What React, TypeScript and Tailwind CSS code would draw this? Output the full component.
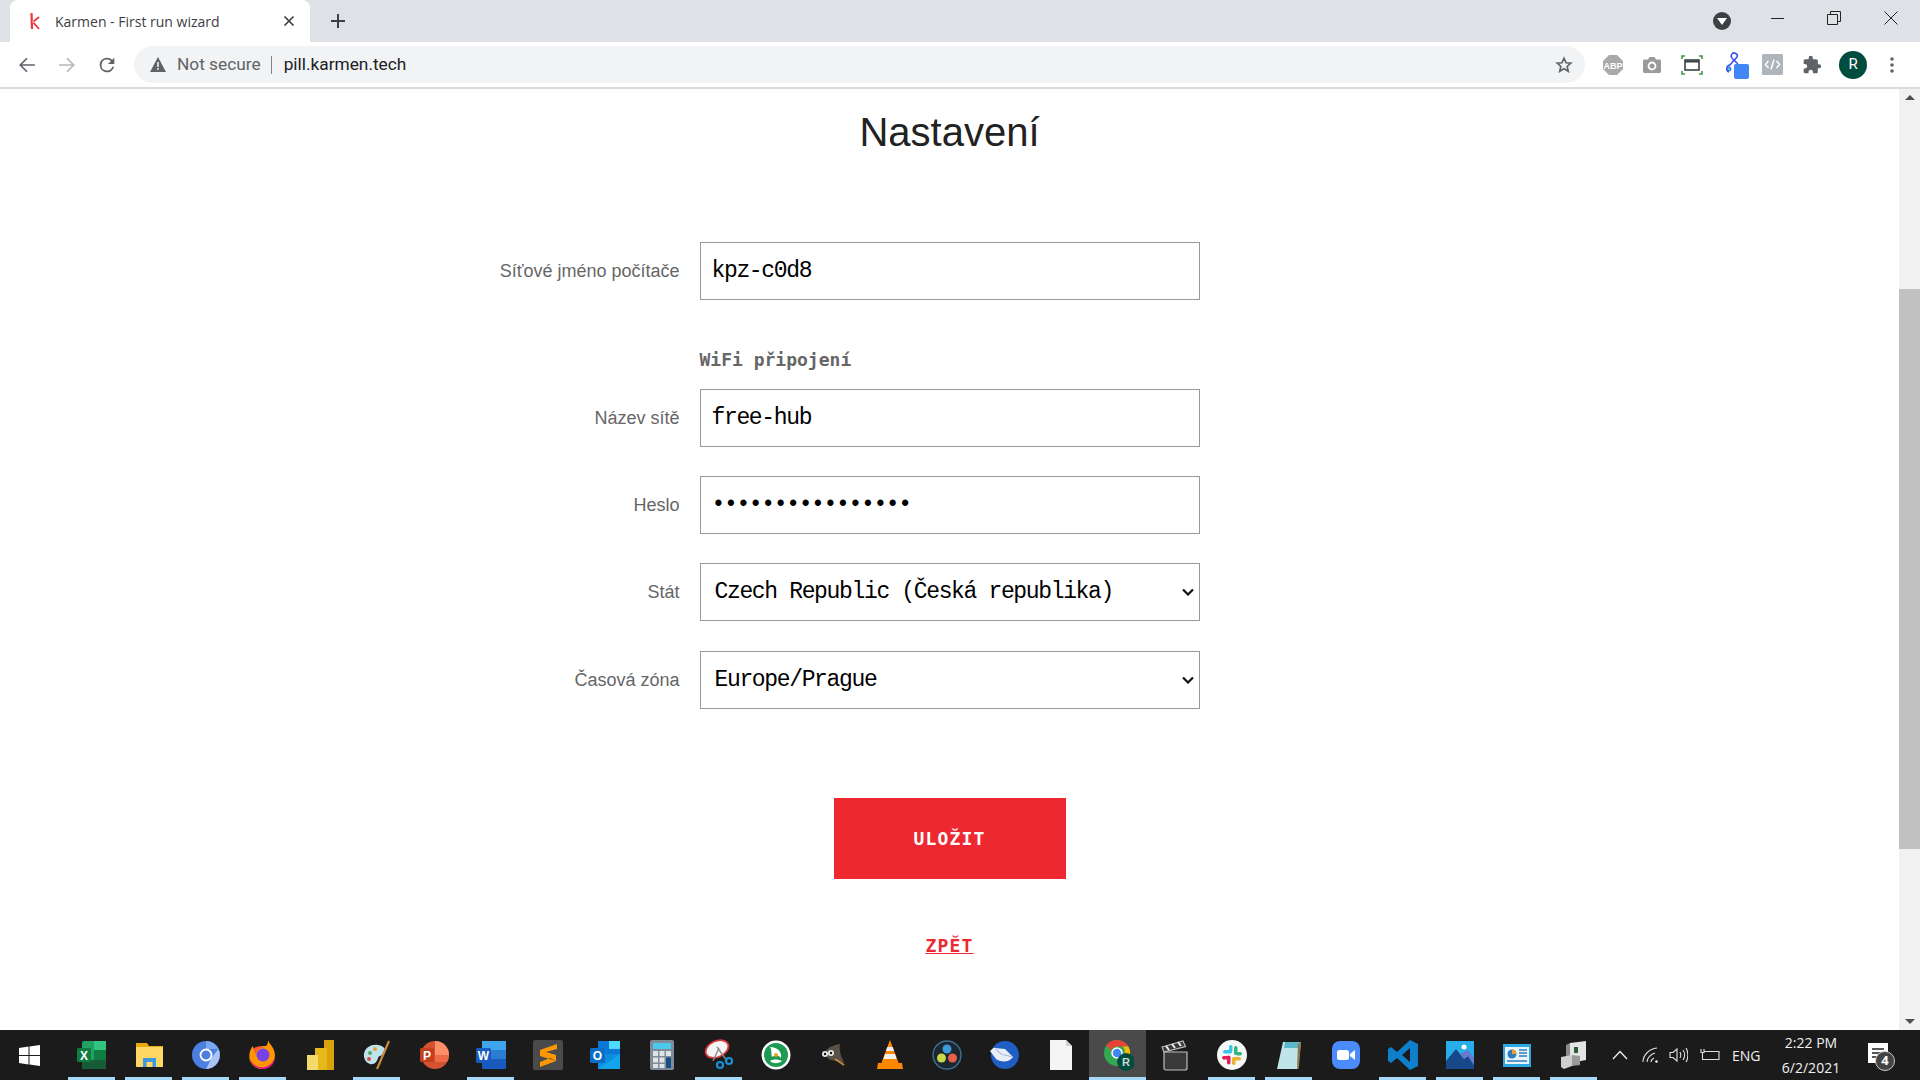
import { ReactNode } from 'react'

const toolbarGray = '#5f6368'

function Favicon() {
  return (
    <svg width="16" height="20" viewBox="0 0 16 20" fill="none">
      <path d="M4.500 2 5 18" stroke="#f0353f" strokeWidth="2.200" />
      <path d="M12 6 6 11l6 7" stroke="#f0353f" strokeWidth="1.800" />
      <path d="M5 11h3" stroke="#f8a0a6" strokeWidth="1.500" />
    </svg>
  )
}

function Abp() {
  return (
    <svg width="22" height="22" viewBox="0 0 22 22">
      <path d="M7 1h8l6 6v8l-6 6H7l-6-6V7z" fill="#a9a9a9" />
      <text x="11" y="14.500" textAnchor="middle" fontSize="9" fontWeight="700" fill="#fff" fontFamily="Liberation Sans, sans-serif">ABP</text>
    </svg>
  )
}

function Camera() {
  return (
    <svg width="20" height="18" viewBox="0 0 20 18">
      <path d="M1 5c0-1 .6-1.600 1.500-1.600H6L7.500 1h5L14 3.400h3.500C18.400 3.400 19 4 19 5v10.500c0 .9-.6 1.500-1.500 1.500h-15C1.600 17 1 16.400 1 15.500z" fill="#9b9b9b" />
      <circle cx="10" cy="10" r="3.500" fill="none" stroke="#fff" strokeWidth="1.800" />
    </svg>
  )
}

function ScreenshotIcon() {
  return (
    <svg width="22" height="20" viewBox="0 0 22 20" fill="none">
      <path d="M1 4V1h3M18 1h3v3M21 16v3h-3M4 19H1v-3" stroke="#3d9a3d" strokeWidth="1.600" />
      <rect x="4" y="5" width="14" height="10" stroke="#3c4043" strokeWidth="1.600" />
      <path d="M4 6.500h14" stroke="#3c4043" strokeWidth="2" />
    </svg>
  )
}

function RouteIcon() {
  return (
    <svg width="26" height="28" viewBox="0 0 26 28" fill="none">
      <path d="M5 15 13 6c1.500-3-3-5.500-5-3C6 5 8 8 11 10l3 3M5 14c-3 1.500-3 6 0 7" stroke="#3f51e8" strokeWidth="1.600" />
      <circle cx="5" cy="18" r="2" fill="#38d6c4" stroke="#3f51e8" strokeWidth="1" />
      <rect x="10" y="13" width="15" height="15" rx="2" fill="#4285f4" />
    </svg>
  )
}

function CodeIcon() {
  return (
    <svg width="21" height="21" viewBox="0 0 21 21" fill="none">
      <rect width="21" height="21" rx="1.500" fill="#aeb4bb" />
      <path d="M6.500 7 3.500 10.500l3 3.500M14.500 7l3 3.500-3 3.500M12 5.500l-3 10" stroke="#fff" strokeWidth="1.500" />
    </svg>
  )
}

function Puzzle() {
  return (
    <svg width="20" height="20" viewBox="0 0 24 24" fill={toolbarGray}>
      <path d="M20.500 11H19V7c0-1.100-.9-2-2-2h-4V3.500a2.500 2.500 0 0 0-5 0V5H4c-1.100 0-2 .9-2 2v3.800h1.500c1.500 0 2.700 1.200 2.700 2.700S5 16.200 3.500 16.200H2V20c0 1.100.9 2 2 2h3.800v-1.500c0-1.500 1.200-2.700 2.700-2.700s2.700 1.200 2.700 2.700V22H17c1.100 0 2-.9 2-2v-4h1.500a2.500 2.500 0 0 0 0-5z" />
    </svg>
  )
}

function TabStrip() {
  return (
    <div className="flex h-[42px] items-start bg-[#dee1e6] pl-[10px]">
      <div className="flex h-[42px] w-[300px] items-center rounded-t-lg bg-white pl-[17px] pr-[10px]">
        <Favicon />
        <span className="ml-[12px] flex-1 font-['Open_Sans',sans-serif] text-[14px] text-[#3c4043]">Karmen - First run wizard</span>
        <svg width="12" height="12" viewBox="0 0 12 12" stroke="#3c4043" strokeWidth="1.700" className="mr-[5px]">
          <path d="m1.500 1.500 9 9m0-9-9 9" />
        </svg>
      </div>
      <svg width="16" height="16" viewBox="0 0 16 16" stroke="#3c4043" strokeWidth="2" className="ml-[20px] mt-[13px]">
        <path d="M8 1v14M1 8h14" />
      </svg>
      <div className="flex-1" />
      <div className="mr-[19px] mt-[12px] flex h-[18px] w-[18px] items-center justify-center rounded-full bg-[#3c4043]">
        <div className="mt-[1px] h-0 w-0 border-x-[5px] border-t-[7px] border-x-transparent border-t-white" />
      </div>
      <div className="flex h-[42px] items-start">
        <div className="flex h-[36px] w-[56px] items-center justify-center pr-[2px]">
          <div className="h-px w-[13px] bg-[#222]" />
        </div>
        <div className="flex h-[36px] w-[56px] items-center justify-center">
          <svg width="14" height="14" viewBox="0 0 14 14" fill="none" stroke="#222">
            <path d="M.5 3.500h10v10H.5zM3.500 3.500v-3h10v10h-3" />
          </svg>
        </div>
        <div className="flex h-[36px] w-[58px] items-center justify-center">
          <svg width="14" height="14" viewBox="0 0 14 14" stroke="#222">
            <path d="m.5.500 13 13m0-13-13 13" />
          </svg>
        </div>
      </div>
    </div>
  )
}

function Toolbar() {
  return (
    <div className="flex h-[47px] items-center border-b-2 border-[#dadce0] bg-white pl-[18px]">
      <svg width="18" height="18" viewBox="0 0 16 16" fill="none" stroke={toolbarGray} strokeWidth="1.500">
        <path d="M15 8H2M8 2 2 8l6 6" />
      </svg>
      <svg width="18" height="18" viewBox="0 0 16 16" fill="none" stroke="#b5b7ba" strokeWidth="1.500" className="ml-[22px]">
        <path d="M1 8h13M8 2l6 6-6 6" />
      </svg>
      <svg width="22" height="22" viewBox="0 0 24 24" fill={toolbarGray} className="ml-[20px]">
        <path d="M17.650 6.350A7.960 7.960 0 0 0 12 4a8 8 0 1 0 7.750 10h-2.080A6 6 0 1 1 12 6c1.660 0 3.140.69 4.220 1.780L13 11h7V4z" />
      </svg>
      <div className="ml-[16px] flex h-[37px] w-[1451px] items-center rounded-full bg-[#f1f3f4] pl-[16px] pr-[12px] font-['Roboto',sans-serif] text-[17.300px]">
        <svg width="16" height="15" viewBox="0 0 16 15" fill={toolbarGray}>
          <path d="M8 0 16 15H0zM7.200 5v5h1.600V5zm0 6v1.800h1.600V11z" fillRule="evenodd" />
        </svg>
        <span className="ml-[11px] text-[#5f6368]">Not secure</span>
        <div className="ml-[10px] h-[18px] w-px bg-[#80868b]" />
        <span className="ml-[12px] text-[#202124]">pill.karmen.tech</span>
        <div className="flex-1" />
        <svg width="18" height="18" viewBox="0 0 24 24" fill="none" stroke={toolbarGray} strokeWidth="2.200">
          <path d="m12 3 2.700 6 6.300.6-4.800 4.300 1.500 6.400L12 17l-5.700 3.300 1.500-6.400L3 9.600 9.300 9z" />
        </svg>
      </div>
      <div className="ml-[17px] flex items-center">
        <Abp />
        <div className="ml-[18px]"><Camera /></div>
        <div className="ml-[19px]"><ScreenshotIcon /></div>
        <div className="ml-[21px]"><RouteIcon /></div>
        <div className="ml-[12px]"><CodeIcon /></div>
        <div className="ml-[19px]"><Puzzle /></div>
        <div className="ml-[17px] flex h-[28px] w-[28px] items-center justify-center rounded-full bg-[#004d40] font-['Roboto',sans-serif] text-[15px] text-white">R</div>
        <svg width="4" height="16" viewBox="0 0 4 16" fill={toolbarGray} className="ml-[23px]">
          <circle cx="2" cy="2" r="1.800" />
          <circle cx="2" cy="8" r="1.800" />
          <circle cx="2" cy="14" r="1.800" />
        </svg>
      </div>
    </div>
  )
}

function Row({ label, children }: { label: string; children: ReactNode }) {
  return (
    <div className="mx-auto flex w-[1000px] items-center">
      <label className="w-[230px] text-right font-['Liberation_Sans',sans-serif] text-[18px] text-[#666]">{label}</label>
      <div className="relative ml-[20px] w-[500px]">{children}</div>
    </div>
  )
}

const fieldClass =
  "block h-[58px] w-full rounded-none border border-[#999] bg-white font-['Liberation_Mono',monospace] text-[23px] tracking-[-1.350px] text-black outline-none"

function Chevron() {
  return (
    <svg width="12" height="8" viewBox="0 0 12 8" fill="none" stroke="#111" strokeWidth="2.200" className="absolute right-[6px] top-[25px]">
      <path d="m1 1.500 5 5 5-5" />
    </svg>
  )
}

function Form() {
  return (
    <div className="flex-1 overflow-hidden bg-white">
      <h1 className="pt-[20px] text-center font-['Liberation_Sans',sans-serif] text-[40px] leading-[46px] text-[#222]">Nastavení</h1>
      <div className="mt-[87px]">
        <Row label="Síťové jméno počítače">
          <input readOnly value="kpz-c0d8" className={`${fieldClass} px-[11px]`} />
        </Row>
      </div>
      <div className="mx-auto mt-[48px] w-[1000px] pl-[250px] font-['DejaVu_Sans_Mono',monospace] text-[18px] font-bold leading-[24px] text-[#666]">WiFi připojení</div>
      <div className="mt-[17px] flex flex-col gap-[29px]">
        <Row label="Název sítě">
          <input readOnly value="free-hub" className={`${fieldClass} px-[11px]`} />
        </Row>
        <Row label="Heslo">
          <input readOnly type="password" value="wifipassword1234" className={`${fieldClass} px-[11px] tracking-[-0.800px]`} />
        </Row>
        <Row label="Stát">
          <select defaultValue="cz" className={`${fieldClass} appearance-none px-[14px]`}>
            <option value="cz">Czech Republic (Česká republika)</option>
          </select>
          <Chevron />
        </Row>
        <div className="mt-[1px]">
          <Row label="Časová zóna">
            <select defaultValue="prg" className={`${fieldClass} appearance-none px-[14px]`}>
              <option value="prg">Europe/Prague</option>
            </select>
            <Chevron />
          </Row>
        </div>
      </div>
      <div className="mt-[89px] flex flex-col items-center">
        <button className="h-[81px] w-[232px] bg-[#ed2831] font-['DejaVu_Sans_Mono',monospace] text-[18px] font-bold tracking-[1.200px] text-white">ULOŽIT</button>
        <a className="mt-[55px] font-['DejaVu_Sans_Mono',monospace] text-[18px] font-bold leading-[24px] tracking-[1.200px] text-[#ed2831] underline">ZPĚT</a>
      </div>
    </div>
  )
}

function Scrollbar() {
  return (
    <div className="flex w-[21px] flex-col bg-[#f1f1f1]">
      <div className="flex h-[17px] items-center justify-center">
        <div className="h-0 w-0 border-x-[5px] border-b-[5px] border-x-transparent border-b-[#505050]" />
      </div>
      <div className="h-[183px]" />
      <div className="h-[560px] bg-[#c1c1c1]" />
      <div className="flex-1" />
      <div className="flex h-[17px] items-center justify-center">
        <div className="h-0 w-0 border-x-[5px] border-t-[5px] border-x-transparent border-t-[#505050]" />
      </div>
    </div>
  )
}

const letter = 'Liberation Sans, sans-serif'

const taskIcons: { name: string; on?: boolean; active?: boolean; art: ReactNode }[] = [
  { name: 'excel', on: true, art: (<>
    <rect x="6" y="2" width="24" height="28" rx="2" fill="#21a366" />
    <rect x="18" y="2" width="12" height="9" fill="#33c481" />
    <rect x="6" y="21" width="24" height="9" rx="1" fill="#185c37" />
    <rect x="18" y="11" width="12" height="10" fill="#107c41" />
    <rect x="1" y="9" width="14" height="14" rx="1.500" fill="#107c41" />
    <text x="8" y="20.500" textAnchor="middle" fontSize="12" fontWeight="700" fill="#fff" fontFamily={letter}>X</text>
  </>) },
  { name: 'explorer', on: true, art: (<>
    <path d="M3 4h11l2 3h14v20a1 1 0 0 1-1 1H4a1 1 0 0 1-1-1z" fill="#e8a80c" />
    <rect x="3" y="8" width="27" height="20" rx="1" fill="#ffd764" />
    <path d="M10 28v-9h13v9h-3.500v-5h-6v5z" fill="#3d9ae0" />
  </>) },
  { name: 'chromium', on: true, art: (<>
    <circle cx="16" cy="16" r="14" fill="#4d7fe0" />
    <path d="M16 2a14 14 0 0 1 12.500 8H16z" fill="#7aa7f2" />
    <path d="M28.500 10A14 14 0 0 1 16 30l6-12z" fill="#a9c4f5" />
    <circle cx="16" cy="16" r="5.500" fill="#4d7fe0" stroke="#fff" strokeWidth="1.800" />
  </>) },
  { name: 'firefox', on: true, art: (<>
    <path d="M21 1c1 4 7 7 7 16a13 13 0 0 1-25 5C1 15 4 9 6 7c0 2 1 3 2 4 2-4 8-4 11-4 2-2 2-4 2-6z" fill="#ff9500" />
    <path d="M3 20a13 13 0 0 0 25-3c0 8-5 13-12 13S4 26 3 20z" fill="#e31587" />
    <circle cx="16" cy="16" r="6.500" fill="#7542e5" />
    <path d="M6 10c3-3 9-3 12-1-5-1-8 2-9 6z" fill="#ff5634" />
  </>) },
  { name: 'powerbi', art: (<>
    <rect x="20" y="1" width="10" height="30" fill="#d9a10c" />
    <rect x="11" y="9" width="12" height="22" fill="#e8b71c" />
    <rect x="3" y="16" width="11" height="15" fill="#f4d96b" />
  </>) },
  { name: 'paint', on: true, art: (<>
    <path d="M3 18C2 10 9 5 17 6c7 1 9 6 6 9-2 2-5 1-6 4-1 4-4 7-8 6-3-1-5-3-6-7z" fill="#bfe3ef" />
    <circle cx="9" cy="14" r="2" fill="#58a55c" />
    <circle cx="14" cy="10" r="2" fill="#e1a12a" />
    <circle cx="8" cy="20" r="2" fill="#d84c3e" />
    <path d="M28 2 16 30" stroke="#c78a3b" strokeWidth="2.200" />
  </>) },
  { name: 'powerpoint', art: (<>
    <circle cx="17" cy="16" r="14" fill="#d35230" />
    <path d="M17 2a14 14 0 0 1 14 14H17z" fill="#ff8f6b" />
    <path d="M17 16h14a14 14 0 0 1-2 7H17z" fill="#ed6c47" />
    <rect x="2" y="9" width="14" height="14" rx="1.500" fill="#c43e1c" />
    <text x="9" y="20.500" textAnchor="middle" fontSize="12" fontWeight="700" fill="#fff" fontFamily={letter}>P</text>
  </>) },
  { name: 'word', on: true, art: (<>
    <rect x="7" y="2" width="24" height="28" rx="1.500" fill="#185abd" />
    <rect x="7" y="2" width="24" height="9" fill="#41a5ee" />
    <rect x="7" y="11" width="24" height="9" fill="#2b7cd3" />
    <rect x="1" y="9" width="15" height="15" rx="1.500" fill="#185abd" />
    <text x="8.500" y="21" textAnchor="middle" fontSize="12" fontWeight="700" fill="#fff" fontFamily={letter}>W</text>
  </>) },
  { name: 'sublime', art: (<>
    <rect x="1" y="1" width="30" height="30" rx="2" fill="#4a4a4a" />
    <path d="m25 5-17 6v6l16 5v-6L14 13l11-3zM24 22 8 28v-5l10-4" fill="#ff9800" />
  </>) },
  { name: 'outlook', art: (<>
    <rect x="9" y="2" width="22" height="16" fill="#0a78d4" />
    <rect x="20" y="2" width="11" height="8" fill="#50d9ff" />
    <path d="M9 15h22v15H9z" fill="#0c8fe0" />
    <path d="m9 30 22-15v15z" fill="#14a4ea" />
    <rect x="1" y="9" width="15" height="15" rx="1.500" fill="#0a6fc4" />
    <text x="8.500" y="21" textAnchor="middle" fontSize="12" fontWeight="700" fill="#fff" fontFamily={letter}>O</text>
  </>) },
  { name: 'calculator', art: (<>
    <rect x="4" y="1" width="24" height="30" rx="2" fill="#7f8c98" />
    <rect x="7" y="4" width="18" height="6" fill="#4cc9ee" />
    <path d="M7 12h5v5H7zm6.500 0h5v5h-5zM20 12h5v5h-5zM7 18.500h5v5H7zm6.500 0h5v5h-5zM7 25h5v4H7zm6.500 0h5v4h-5z" fill="#dfe4e8" />
    <rect x="20" y="18.500" width="5" height="10.500" fill="#154f8a" />
  </>) },
  { name: 'snip', on: true, art: (<>
    <ellipse cx="14" cy="10" rx="12" ry="8" fill="#f5f5f5" stroke="#d63a3a" strokeWidth="1.800" transform="rotate(-25 14 10)" />
    <path d="M14 8 24 22M10 22l6-13" stroke="#8a8a8a" strokeWidth="1.400" />
    <circle cx="17" cy="26" r="3" fill="none" stroke="#1a8fd6" strokeWidth="2.200" />
    <circle cx="26" cy="22" r="3" fill="none" stroke="#1a8fd6" strokeWidth="2.200" />
  </>) },
  { name: 'pdf', art: (<>
    <circle cx="16" cy="16" r="14.500" fill="#fff" />
    <circle cx="16" cy="16" r="12" fill="#1b9c52" />
    <path d="M10 8c8 0 12 5 11 11-3-3-6-3-9-1-1-4 0-7-2-10zM22 22c-4 3-9 3-12 0 3-2 8-2 12 0z" fill="#fff" />
    <circle cx="16" cy="16" r="2" fill="#e8a020" />
  </>) },
  { name: 'gimp', art: (<>
    <path d="M8 13c3-5 9-7 15-8-1 3 0 7 1 12 1 3 3 5 3 7-4-2-10-2-13-3-3-1-5-4-6-8z" fill="#5a5248" />
    <circle cx="8" cy="15" r="3" fill="#e8e8e8" />
    <circle cx="14" cy="14" r="3" fill="#e8e8e8" />
    <circle cx="8" cy="15" r="1.200" fill="#111" />
    <circle cx="14" cy="14" r="1.200" fill="#111" />
    <path d="m18 20 9 6" stroke="#c78a3b" strokeWidth="1.800" />
  </>) },
  { name: 'vlc', art: (<>
    <path d="M16 1 25 25H7z" fill="#ff8800" />
    <path d="M13.300 8h5.400l1.400 4h-8.200zM11 15h10l1.600 5H9.400z" fill="#f0f0f0" />
    <path d="M4 24h4l-1 1h18l-1-1h4l1 6H3z" fill="#ff8800" />
  </>) },
  { name: 'resolve', art: (<>
    <circle cx="16" cy="16" r="14" fill="#1c2730" stroke="#3f6f90" strokeWidth="1.400" />
    <circle cx="16" cy="10" r="4.500" fill="#3a9cdb" />
    <circle cx="10.500" cy="19" r="4.500" fill="#c9d84a" />
    <circle cx="21.500" cy="19" r="4.500" fill="#e8604c" />
  </>) },
  { name: 'thunderbird', art: (<>
    <circle cx="17" cy="16" r="14" fill="#1f5fc4" />
    <path d="M2 12c2-1 3-4 5-3l10 1 8 8c-4 6-13 5-17 2z" fill="#e8eef8" />
    <path d="M8 10c3 4 7 6 9 6l8 2" fill="none" stroke="#a8b8d8" strokeWidth="1.200" />
  </>) },
  { name: 'file', art: (<>
    <path d="M5 1h16l6 6v24H5z" fill="#f5f5f5" />
    <path d="M21 1v6h6z" fill="#cfcfcf" />
  </>) },
  { name: 'chrome', on: true, active: true, art: (<>
    <circle cx="15" cy="14" r="13" fill="#34a853" />
    <path d="M15 1a13 13 0 0 1 11.300 6.500H15a6.500 6.500 0 0 0-6 4L4.500 6A13 13 0 0 1 15 1z" fill="#ea4335" />
    <path d="M26.300 7.500A13 13 0 0 1 15 27l5.600-9.800a6.500 6.500 0 0 0 .2-9.700z" fill="#fbbc05" />
    <circle cx="15" cy="14" r="5" fill="#4285f4" stroke="#fff" strokeWidth="1.500" />
    <circle cx="24" cy="23" r="9" fill="#004d40" />
    <text x="24" y="27" textAnchor="middle" fontSize="11" fontWeight="700" fill="#c8d8d4" fontFamily={letter}>R</text>
  </>) },
  { name: 'clapper', art: (<>
    <path d="M5 13h23v16a2 2 0 0 1-2 2H7a2 2 0 0 1-2-2z" fill="#3a3a3a" stroke="#bdbdbd" strokeWidth="1.200" />
    <path d="m3 8 21-6 2.500 5.500L5 13z" fill="#3a3a3a" stroke="#bdbdbd" strokeWidth="1.200" />
    <path d="m7 7 3 4m3-6 3 4m3-6 3 4" stroke="#eee" strokeWidth="2" />
  </>) },
  { name: 'slack', on: true, art: (<>
    <circle cx="16" cy="16" r="15" fill="#f7f7f7" />
    <rect x="7" y="11" width="9" height="3.500" rx="1.700" fill="#36c5f0" />
    <rect x="13" y="6" width="3.500" height="7" rx="1.700" fill="#36c5f0" />
    <rect x="18" y="7" width="3.500" height="9" rx="1.700" fill="#2eb67d" />
    <rect x="20" y="13" width="6" height="3.500" rx="1.700" fill="#2eb67d" />
    <rect x="16" y="18" width="9" height="3.500" rx="1.700" fill="#ecb22e" />
    <rect x="16" y="19" width="3.500" height="7" rx="1.700" fill="#ecb22e" />
    <rect x="11" y="16.500" width="3.500" height="9" rx="1.700" fill="#e01e5a" />
    <rect x="6" y="17" width="7" height="3.500" rx="1.700" fill="#e01e5a" />
  </>) },
  { name: 'notepad', on: true, art: (<>
    <path d="M10 3h18l-3 27H4z" fill="#bfe4ea" />
    <path d="m12 3 16 0-1 6H11z" fill="#5bb8c8" />
    <path d="m25 5 3-2-2 26-2 1z" fill="#8a7650" />
  </>) },
  { name: 'zoom', art: (<>
    <rect x="2" y="2" width="28" height="28" rx="8" fill="#4a8cff" />
    <rect x="7" y="11" width="12" height="10" rx="2.500" fill="#fff" />
    <path d="m20 15 5-4v10l-5-4z" fill="#fff" />
  </>) },
  { name: 'vscode', on: true, art: (<>
    <path d="M23 1 31 5v22l-8 4-13-12-6 5-3-2V10l3-2 6 5zM23 9l-8 7 8 7z" fill="#0f7ecb" fillRule="evenodd" />
  </>) },
  { name: 'photos', on: true, art: (<>
    <rect x="2" y="2" width="28" height="28" fill="#28aee8" />
    <circle cx="20" cy="8" r="2.500" fill="#fff" />
    <path d="M2 22 12 10l8 10 4-3 6 9v4H2z" fill="#17488a" />
    <path d="m16 15 4 5 4-3 6 9v-7l-6-8z" fill="#6a78d0" />
  </>) },
  { name: 'panel', on: true, art: (<>
    <rect x="2" y="5" width="28" height="23" fill="#2da7e0" />
    <rect x="4" y="8" width="24" height="17" fill="#e8f3fa" />
    <circle cx="11" cy="15" r="4.500" fill="#2d7ec0" />
    <path d="M11 15v-4.500a4.500 4.500 0 0 1 4.500 4.500z" fill="#f0a020" />
    <path d="M18 11h8M18 14h8M18 17h8M6 22h20" stroke="#2d7ec0" strokeWidth="1.400" />
  </>) },
  { name: 'disk', on: true, art: (<>
    <path d="M12 4 28 2v19l-16 3z" fill="#e4e4e4" />
    <path d="M12 4 8 6v20l4-2z" fill="#8a8a8a" />
    <rect x="16" y="8" width="4" height="6" fill="#2d5c3a" />
    <path d="M3 18 14 16v11l-8 3-3-2z" fill="#cfcfcf" />
    <path d="m14 16 8 1v9l-8 1z" fill="#9a9a9a" />
  </>) },
]

function Taskbar() {
  return (
    <div className="flex h-[50px] items-center bg-[#1b1b1b] font-['Open_Sans',sans-serif] text-[#f0f0f0]">
      <div className="flex h-full w-[63px] items-center justify-center pr-[5px]">
        <svg width="21" height="21" viewBox="0 0 21 21" fill="#fff">
          <path d="M0 3 9.500 1.600v8.300H0zM10.500 1.500 21 0v9.900H10.500zM0 11h9.500v8.400L0 18zM10.500 11H21v10l-10.500-1.500z" />
        </svg>
      </div>
      {taskIcons.map((t) => (
        <div key={t.name} className={`relative flex h-full w-[57px] items-center justify-center ${t.active ? 'bg-[#4a4a4a]' : ''}`}>
          <svg width="32" height="32" viewBox="0 0 32 32">{t.art}</svg>
          {t.on && <div className={`absolute bottom-0 h-[3px] bg-[#a6d8fa] ${t.active ? 'inset-x-0' : 'inset-x-[5px]'}`} />}
        </div>
      ))}
      <div className="flex flex-1 items-center pl-[10px]">
        <svg width="16" height="10" viewBox="0 0 16 10" fill="none" stroke="#f0f0f0" strokeWidth="1.300">
          <path d="m1 9 7-7.500L15 9" />
        </svg>
        <svg width="17" height="16" viewBox="0 0 17 16" fill="none" stroke="#e0e0e0" strokeWidth="1.100" className="ml-[14px]">
          <path d="M1 15C1 8 7 2 15 1M5 15c0-4 4-8 8-9M9 15c0-2 1-3 3-4" />
          <circle cx="14.500" cy="14.500" r="1.200" fill="#fff" stroke="none" />
        </svg>
        <svg width="19" height="16" viewBox="0 0 19 16" fill="none" stroke="#e0e0e0" strokeWidth="1.100" className="ml-[10px]">
          <path d="M1 5.500h3L8 2v12l-4-3.500H1zM11 5c1 2 1 4 0 6M14 3c2 3 2 7 0 10M17 1c2.500 4 2.500 10 0 14" />
        </svg>
        <svg width="20" height="14" viewBox="0 0 20 14" fill="none" stroke="#e0e0e0" strokeWidth="1.100" className="ml-[12px]">
          <path d="M4 3.500h15v8H2.500V7M1 1v3.500h3V1M2.500 4.500V7" />
        </svg>
        <span className="ml-[12px] w-[30px] text-[14px]">ENG</span>
        <div className="ml-[14px] flex w-[70px] flex-col items-center text-[14px] leading-[25px]">
          <span>2:22 PM</span>
          <span>6/2/2021</span>
        </div>
        <div className="relative ml-[22px] h-[24px] w-[24px]">
          <svg width="20" height="20" viewBox="0 0 20 20" className="absolute left-0 top-0">
            <path d="M0 0h20v20H0z" fill="#fff" />
            <path d="M4 6h12M4 10h12M4 14h8" stroke="#222" strokeWidth="1.300" />
          </svg>
          <div className="absolute -right-[3px] top-[8px] flex h-[20px] w-[20px] items-center justify-center rounded-full border border-[#ccc] bg-[#444] text-[13px] font-bold text-white">4</div>
        </div>
      </div>
    </div>
  )
}

export default function App() {
  return (
    <div className="flex h-screen w-full flex-col overflow-hidden bg-white">
      <TabStrip />
      <Toolbar />
      <div className="flex min-h-0 flex-1">
        <Form />
        <Scrollbar />
      </div>
      <Taskbar />
    </div>
  )
}
